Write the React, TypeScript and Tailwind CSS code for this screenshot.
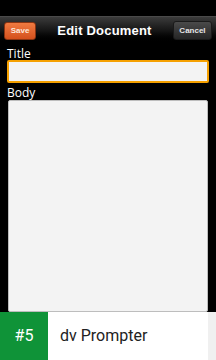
export default function App() {
    return (
        <div
            className="w-[216px] h-[360px] bg-black flex flex-col overflow-hidden"
            style={{ fontFamily: '"Liberation Sans", Arial, sans-serif' }}
        >
            {/* status strip */}
            <div className="h-[16px] bg-black" />
            {/* header */}
            <div className="h-[28px] flex items-center justify-between px-[4px] bg-gradient-to-b from-[#3c3c3c] via-[#161616] to-black border-t border-[#4a4a4a]">
                <div className="w-[32px] h-[18px] rounded-[3px] bg-gradient-to-b from-[#f07a40] to-[#d4501c] border border-[#8a3412] flex items-center justify-center text-[8px] font-bold text-[#fde7dc]">
                    Save
                </div>
                <div className="text-white font-bold text-[13px] tracking-[0.2px]">
                    Edit Document
                </div>
                <div className="w-[39px] h-[19px] rounded-[3px] bg-gradient-to-b from-[#4a4a4a] to-[#262626] border border-[#1a1a1a] flex items-center justify-center text-[8px] font-bold text-[#e6e6e6]">
                    Cancel
                </div>
            </div>
            {/* form */}
            <div className="flex-1 flex flex-col px-[7px] pt-[3px]" style={{ fontFamily: '"Open Sans", "DejaVu Sans", sans-serif' }}>
                <div className="text-white text-[12px] leading-[13px]">Title</div>
                <div className="h-[23px] bg-[#f3f3f3] border-2 border-[#f5a000] rounded-[2px]" />
                <div className="text-white text-[12px] leading-[14px] mt-[3px]">Body</div>
                <div className="flex-1 mx-[1px] bg-[#f3f3f3] border border-[#bdbdbd] rounded-[2px]" />
            </div>
            {/* banner */}
            <div className="h-[48px] flex bg-white" style={{ fontFamily: 'Roboto, sans-serif' }}>
                <div className="w-[48px] bg-[#0f9338] flex items-center justify-center text-white text-[16px]">
                    #5
                </div>
                <div className="flex-1 flex items-center pl-[12px] text-[#222] text-[16px] border-r-[8px] border-[#f0f0f0]">
                    dv Prompter
                </div>
            </div>
        </div>
    );
}
